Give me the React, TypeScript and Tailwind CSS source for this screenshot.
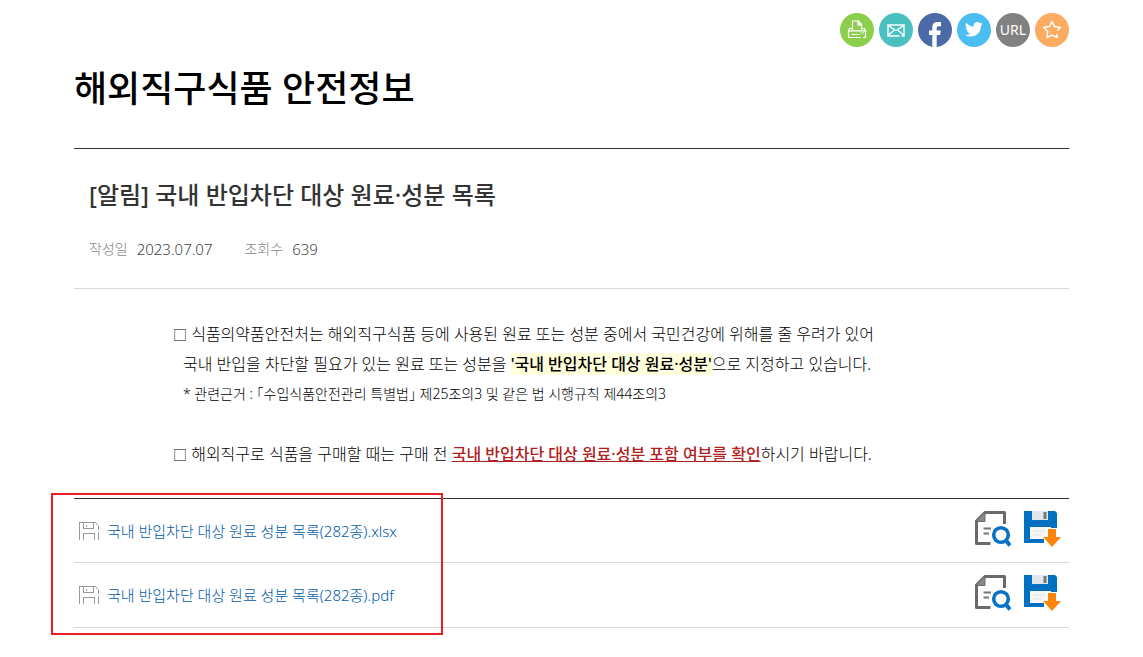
import type { ReactNode } from 'react'

interface ShareItem {
  label: string
  className: string
  icon: ReactNode
}

const shareItems: ShareItem[] = [
  {
    label: '인쇄',
    className: 'bg-[#8ccf4d]',
    icon: (
      <svg viewBox="0 0 34 34" className="size-full" fill="none" stroke="#fff" strokeWidth="1.2">
        <path d="M12.500 17V8h6l3 3v6" />
        <path d="M18 8v4h3.500z" fill="#fff" />
        <path d="M12.500 15.500H9.500l-1 2v7h12.500M23 24.500h2.500v-7l-1-2h-3" />
        <path d="M8.500 17.800h17M11.500 21.500h8.500" />
        <path d="M20.800 19.800h1M22.800 19.800h1" />
      </svg>
    ),
  },
  {
    label: '메일',
    className: 'bg-[#4bc0c0]',
    icon: (
      <svg viewBox="0 0 34 34" className="size-full" fill="none" stroke="#fff" strokeWidth="1.4">
        <path d="M20.500 23H9V12h16v11h-2.500" />
        <path d="M9 12.500l8 5 8-5M9 22.500l6-5.200M25 22.500l-6-5.200" />
      </svg>
    ),
  },
  {
    label: '페이스북',
    className: 'bg-[#4c69a8]',
    icon: (
      <svg viewBox="0 0 34 34" className="size-full" fill="#fff">
        <path d="M14.300 34V22H11v-4.600h3.300v-3c0-3.600 2.100-5.400 5.300-5.400H23v4.200h-2.300c-1.500 0-2 .7-2 2v2.200h4.100L22.200 22h-3.500v12z" />
      </svg>
    ),
  },
  {
    label: '트위터',
    className: 'bg-[#4bbdf0]',
    icon: (
      <svg viewBox="0 0 34 34" className="size-full">
        <g transform="translate(8 7.500) scale(0.740)">
          <path
            fill="#fff"
            d="M23.950 4.570a10 10 0 0 1-2.820.770 4.960 4.960 0 0 0 2.160-2.720c-.950.550-2 .950-3.120 1.180a4.920 4.920 0 0 0-8.380 4.480C7.690 8.090 4.070 6.130 1.640 3.160a4.920 4.920 0 0 0 1.520 6.570 4.900 4.900 0 0 1-2.230-.610v.060a4.920 4.920 0 0 0 3.950 4.830 5 5 0 0 1-2.210.080 4.940 4.940 0 0 0 4.600 3.420A9.870 9.870 0 0 1 0 19.540a13.990 13.990 0 0 0 7.550 2.210c9.050 0 14-7.500 14-13.980 0-.210 0-.420-.010-.630a9.940 9.940 0 0 0 2.410-2.570z"
          />
        </g>
      </svg>
    ),
  },
  {
    label: 'URL 복사',
    className: 'bg-[#818181]',
    icon: 'URL',
  },
  {
    label: '즐겨찾기',
    className: 'bg-[#fbac61]',
    icon: (
      <svg viewBox="0 0 34 34" className="size-full" fill="none" stroke="#fff" strokeWidth="1.5" strokeLinejoin="round">
        <path d="M22.300 17.500l3-3-5.700-.900L17 8.700l-2.600 4.900-5.700.900 4 4.100-.800 5.900 5.100-2.400 5.200 2.400-.500-3.500" />
      </svg>
    ),
  },
]

const files = ['국내 반입차단 대상 원료 성분 목록(282종).xlsx', '국내 반입차단 대상 원료 성분 목록(282종).pdf']

function DisketteIcon() {
  return (
    <svg viewBox="0 0 20 18" className="h-[18px] w-5 shrink-0" fill="none" stroke="#999" shapeRendering="crispEdges">
      <path d="M.5 18V.5H16.500M19.500 4v4M19.500 10v8" />
      <path d="M16.500 .5l3 3" shapeRendering="auto" />
      <path d="M4.500 1v5.500h10V1M7.500 2.500v2" />
      <path d="M4.500 18v-6.500h11V18" />
    </svg>
  )
}

function PreviewIcon() {
  return (
    <svg viewBox="0 0 36 36" className="size-9" fill="none">
      <path d="M29.500 13V1.500H10L1.500 10v22.500h14" stroke="#6a6a6a" strokeWidth="3" strokeLinejoin="round" />
      <path d="M10 1v9.500H1z" fill="#8a8a8a" stroke="#6a6a6a" />
      <path d="M8.500 17.500h7.500M8.500 22.500h5.500" stroke="#777" strokeWidth="1.800" />
      <circle cx="26" cy="24" r="7.300" fill="#fff" stroke="#0a72c4" strokeWidth="3.600" />
      <path d="M31 29.500l4 5" stroke="#0a72c4" strokeWidth="4" />
    </svg>
  )
}

function SaveIcon() {
  return (
    <svg viewBox="0 0 37 36" className="h-9 w-[37px]">
      <path d="M0 0h31l2 2v30H0z" fill="#0070c0" />
      <path d="M8 0h16v9H8z" fill="#e3e6ea" />
      <path d="M19.500 1h3v7h-3z" fill="#777" />
      <path d="M6 16h21v12H6z" fill="#f7f7f7" />
      <path d="M9 20h12M9 24h9" stroke="#e4e4e4" />
      <path d="M20 27v9h17V17H23v10z" fill="#fff" />
      <path d="M24 18h8v8h5l-9 10-9-10h5z" fill="#ff850a" />
    </svg>
  )
}

export default function App() {
  return (
    <main className="bg-white px-[74px] pt-[13px] pb-7 font-['Noto_Sans','Noto_Sans_CJK_KR',sans-serif] text-black">
      <div className="flex justify-end gap-[5px]">
        {shareItems.map((item) => (
          <button
            key={item.label}
            type="button"
            aria-label={item.label}
            className={`flex size-[34px] items-center justify-center overflow-hidden rounded-full text-sm text-white ${item.className}`}
          >
            {item.icon}
          </button>
        ))}
      </div>

      <h1 className="mt-[17px] text-4xl leading-[50px] font-medium">해외직구식품 안전정보</h1>

      <article className="mt-[34px] border-t border-[#333]">
        <header className="border-b border-[#d9d9d9] px-[15px] pt-7 pb-[27px]">
          <h2 className="text-2xl leading-9 font-medium text-[#333]">[알림] 국내 반입차단 대상 원료·성분 목록</h2>
          <dl className="mt-6 flex text-sm leading-6 font-light">
            <dt className="text-[#888]">작성일</dt>
            <dd className="mr-8 ml-[9px] text-[15px] text-[#444]">2023.07.07</dd>
            <dt className="text-[#888]">조회수</dt>
            <dd className="ml-[9px] text-[15px] text-[#444]">639</dd>
          </dl>
        </header>

        <div className="px-[99px] pt-[30px] pb-[29px] text-base leading-[30px] font-light">
          <p>
            <span className="text-sm">□</span> 식품의약품안전처는 해외직구식품 등에 사용된 원료 또는 성분 중에서 국민건강에
            위해를 줄 우려가 있어
          </p>
          <p className="pl-[10px]">
            국내 반입을 차단할 필요가 있는 원료 또는 성분을{' '}
            <strong className="bg-[#ffffdc] font-medium">'국내 반입차단 대상 원료·성분'</strong>으로 지정하고 있습니다.
          </p>
          <p className="pl-[10px] text-sm leading-[30px]">
            * 관련근거 : ｢수입식품안전관리 특별법｣ 제25조의3 및 같은 법 시행규칙 제44조의3
          </p>
          <p className="mt-[30px]">
            <span className="text-sm">□</span> 해외직구로 식품을 구매할 때는 구매 전{' '}
            <strong className="font-medium text-[#b02020] underline">국내 반입차단 대상 원료·성분 포함 여부를 확인</strong>
            하시기 바랍니다.
          </p>
        </div>
      </article>

      <section className="relative border-t border-[#333]">
        <ul>
          {files.map((file) => (
            <li key={file} className="flex items-center border-b border-[#d9d9d9] pt-3 pr-2 pb-[15px] pl-[5px] last:pb-4">
              <a href="#" className="mt-1 flex items-center gap-2 text-[15px] leading-6 font-light text-[#0059a8]">
                <DisketteIcon />
                {file}
              </a>
              <div className="ml-auto flex items-center gap-[13px]">
                <button type="button" aria-label={`${file} 미리보기`}>
                  <PreviewIcon />
                </button>
                <button type="button" aria-label={`${file} 다운로드`}>
                  <SaveIcon />
                </button>
              </div>
            </li>
          ))}
        </ul>
        {/* highlight frame over the attachment names */}
        <div className="pointer-events-none absolute -top-[6px] -bottom-[7px] -left-[23px] w-[392px] border-2 border-[#ed1c24]" />
      </section>
    </main>
  )
}
